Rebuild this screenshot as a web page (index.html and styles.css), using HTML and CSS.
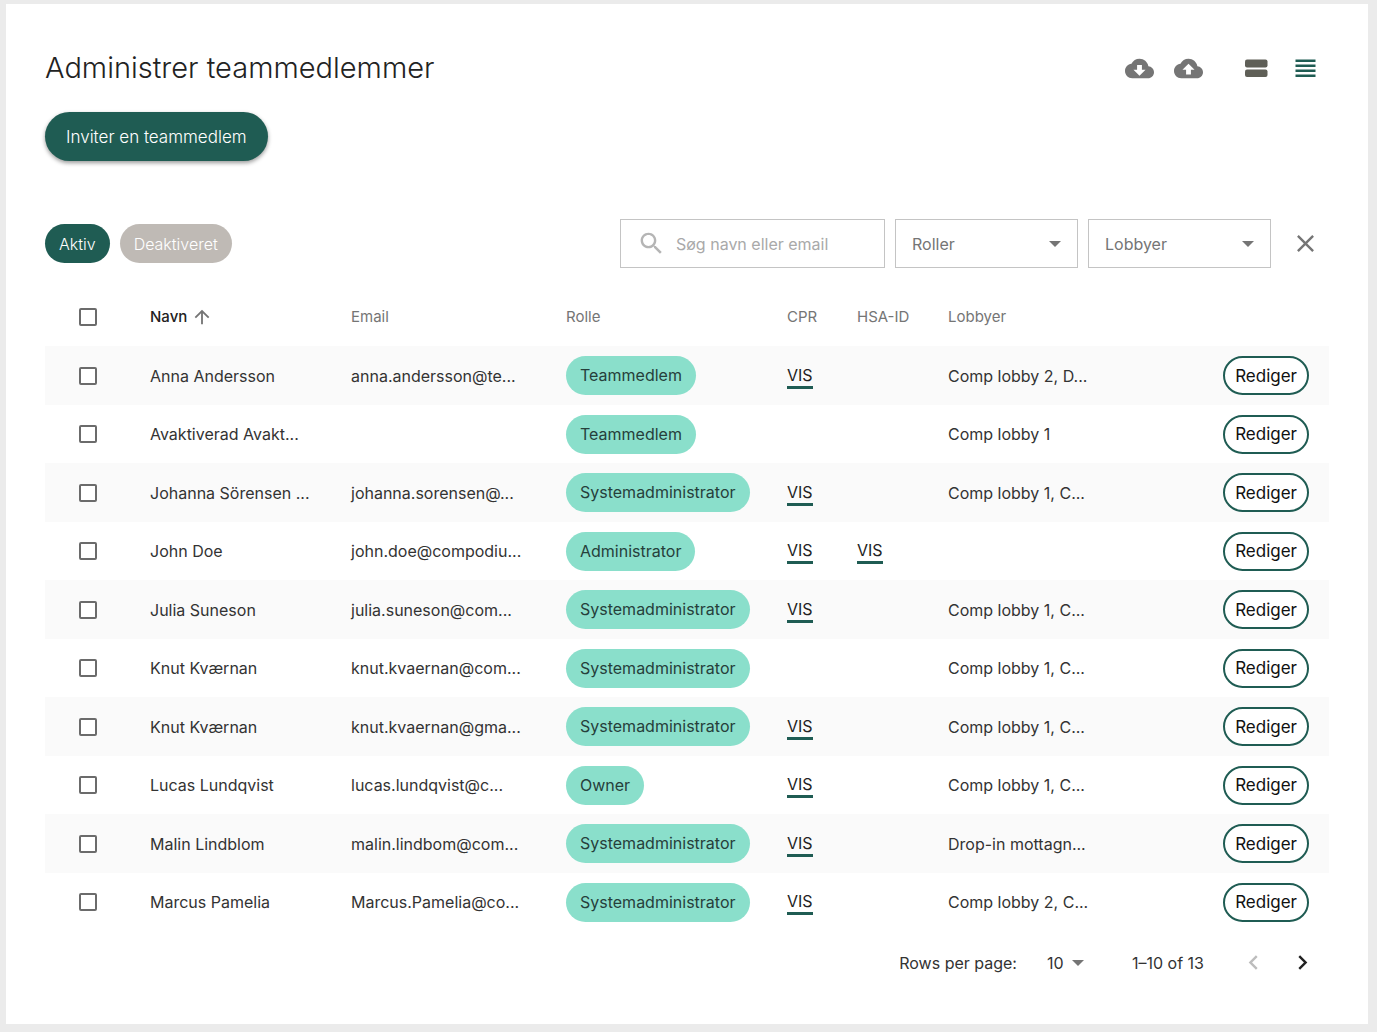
FILE: index.html
```
<!DOCTYPE html>
<html lang="da">
  <head>
    <meta charset="UTF-8" />
    <title>Administrer teammedlemmer</title>
    <meta name="viewport" content="width=device-width, initial-scale=1.0" />
    <link rel="stylesheet" href="styles.css">
  </head>
  <body>
    <!-- shared icons -->
    <svg width="0" height="0" class="sprite" aria-hidden="true">
      <symbol id="i-down" viewBox="0 0 24 24"><path d="M19.35 10.04C18.67 6.59 15.64 4 12 4 9.11 4 6.6 5.64 5.35 8.04 2.34 8.36 0 10.91 0 14c0 3.31 2.69 6 6 6h13c2.76 0 5-2.24 5-5 0-2.64-2.05-4.78-4.65-4.96zM17 13l-5 5-5-5h3V9h4v4h3z"/></symbol>
      <symbol id="i-up" viewBox="0 0 24 24"><path d="M19.35 10.04C18.67 6.59 15.64 4 12 4 9.11 4 6.6 5.64 5.35 8.04 2.34 8.36 0 10.91 0 14c0 3.31 2.69 6 6 6h13c2.76 0 5-2.24 5-5 0-2.64-2.05-4.78-4.65-4.96zM14 13v4h-4v-4H7l5-5 5 5h-3z"/></symbol>
      <symbol id="i-search" viewBox="0 0 24 24"><path d="M15.5 14h-.79l-.28-.27C15.41 12.59 16 11.11 16 9.5 16 5.91 13.09 3 9.5 3S3 5.91 3 9.5 5.91 16 9.5 16c1.61 0 3.09-.59 4.23-1.57l.27.28v.79l5 4.99L20.49 19l-4.99-5zm-6 0C7.01 14 5 11.99 5 9.5S7.01 5 9.5 5 14 7.01 14 9.5 11.99 14 9.5 14z"/></symbol>
      <symbol id="i-close" viewBox="0 0 24 24"><path d="M19 6.41L17.59 5 12 10.59 6.41 5 5 6.41 10.59 12 5 17.59 6.41 19 12 13.41 17.59 19 19 17.59 13.41 12z"/></symbol>
      <symbol id="i-arrow" viewBox="0 0 24 24"><path d="M4 12l1.41 1.41L11 7.83V20h2V7.83l5.58 5.59L20 12l-8-8-8 8z"/></symbol>
      <symbol id="i-left" viewBox="0 0 24 24"><path d="M15.41 16.59L10.83 12l4.58-4.59L14 6l-6 6 6 6 1.41-1.41z"/></symbol>
      <symbol id="i-right" viewBox="0 0 24 24"><path d="M8.59 16.59L13.17 12 8.59 7.41 10 6l6 6-6 6-1.41-1.41z"/></symbol>
    </svg>

    <div class="page">
      <main class="card">
        <header class="head">
          <h1>Administrer teammedlemmer</h1>
          <div class="tools">
            <button class="icon-btn" aria-label="Download"><svg><use href="#i-down"/></svg></button>
            <button class="icon-btn" aria-label="Upload"><svg><use href="#i-up"/></svg></button>
            <button class="icon-btn view-cards" aria-label="Kort"><svg viewBox="0 0 29 29"><rect x="3" y="5.5" width="22.5" height="8" rx="2"/><rect x="3" y="15.5" width="22.5" height="7.5" rx="2"/></svg></button>
            <button class="icon-btn view-list" aria-label="Liste"><svg viewBox="0 0 29 29"><path d="M4.5 5.5h20V8h-20zM4.5 10.5h20V13h-20zM4.5 15.5h20V18h-20zM4.5 20.5h20V23h-20z"/></svg></button>
          </div>
        </header>

        <button class="btn-invite">Inviter en teammedlem</button>

        <div class="filters">
          <button class="tab active">Aktiv</button>
          <button class="tab">Deaktiveret</button>
          <label class="search">
            <svg><use href="#i-search"/></svg>
            <input type="text" placeholder="Søg navn eller email" aria-label="Søg navn eller email" />
          </label>
          <div class="select">
            <select aria-label="Roller"><option>Roller</option></select>
          </div>
          <div class="select">
            <select aria-label="Lobbyer"><option>Lobbyer</option></select>
          </div>
          <button class="icon-btn clear" aria-label="Ryd"><svg><use href="#i-close"/></svg></button>
        </div>

        <table class="members">
          <colgroup>
            <col class="c-check" /><col class="c-name" /><col class="c-email" /><col class="c-role" /><col class="c-cpr" /><col class="c-hsa" /><col />
            <col class="c-edit" />
          </colgroup>
          <thead>
            <tr>
              <th><input type="checkbox" aria-label="Vælg alle" /></th>
              <th class="sorted"><span>Navn<svg><use href="#i-arrow"/></svg></span></th>
              <th>Email</th>
              <th>Rolle</th>
              <th>CPR</th>
              <th>HSA-ID</th>
              <th>Lobbyer</th>
              <th></th>
            </tr>
          </thead>
          <tbody>
            <tr>
              <td><input type="checkbox" aria-label="Anna Andersson" /></td>
              <td>Anna Andersson</td>
              <td>anna.andersson@te...</td>
              <td><span class="role">Teammedlem</span></td>
              <td><a href="#">VIS</a></td>
              <td></td>
              <td>Comp lobby 2, D...</td>
              <td><button class="btn-edit">Rediger</button></td>
            </tr>
            <tr>
              <td><input type="checkbox" aria-label="Avaktiverad Avakt..." /></td>
              <td>Avaktiverad Avakt...</td>
              <td></td>
              <td><span class="role">Teammedlem</span></td>
              <td></td>
              <td></td>
              <td>Comp lobby 1</td>
              <td><button class="btn-edit">Rediger</button></td>
            </tr>
            <tr>
              <td><input type="checkbox" aria-label="Johanna Sörensen" /></td>
              <td>Johanna Sörensen ...</td>
              <td>johanna.sorensen@...</td>
              <td><span class="role">Systemadministrator</span></td>
              <td><a href="#">VIS</a></td>
              <td></td>
              <td>Comp lobby 1, C...</td>
              <td><button class="btn-edit">Rediger</button></td>
            </tr>
            <tr>
              <td><input type="checkbox" aria-label="John Doe" /></td>
              <td>John Doe</td>
              <td>john.doe@compodiu...</td>
              <td><span class="role">Administrator</span></td>
              <td><a href="#">VIS</a></td>
              <td><a href="#">VIS</a></td>
              <td></td>
              <td><button class="btn-edit">Rediger</button></td>
            </tr>
            <tr>
              <td><input type="checkbox" aria-label="Julia Suneson" /></td>
              <td>Julia Suneson</td>
              <td>julia.suneson@com...</td>
              <td><span class="role">Systemadministrator</span></td>
              <td><a href="#">VIS</a></td>
              <td></td>
              <td>Comp lobby 1, C...</td>
              <td><button class="btn-edit">Rediger</button></td>
            </tr>
            <tr>
              <td><input type="checkbox" aria-label="Knut Kværnan" /></td>
              <td>Knut Kværnan</td>
              <td>knut.kvaernan@com...</td>
              <td><span class="role">Systemadministrator</span></td>
              <td></td>
              <td></td>
              <td>Comp lobby 1, C...</td>
              <td><button class="btn-edit">Rediger</button></td>
            </tr>
            <tr>
              <td><input type="checkbox" aria-label="Knut Kværnan" /></td>
              <td>Knut Kværnan</td>
              <td>knut.kvaernan@gma...</td>
              <td><span class="role">Systemadministrator</span></td>
              <td><a href="#">VIS</a></td>
              <td></td>
              <td>Comp lobby 1, C...</td>
              <td><button class="btn-edit">Rediger</button></td>
            </tr>
            <tr>
              <td><input type="checkbox" aria-label="Lucas Lundqvist" /></td>
              <td>Lucas Lundqvist</td>
              <td>lucas.lundqvist@c...</td>
              <td><span class="role">Owner</span></td>
              <td><a href="#">VIS</a></td>
              <td></td>
              <td>Comp lobby 1, C...</td>
              <td><button class="btn-edit">Rediger</button></td>
            </tr>
            <tr>
              <td><input type="checkbox" aria-label="Malin Lindblom" /></td>
              <td>Malin Lindblom</td>
              <td>malin.lindbom@com...</td>
              <td><span class="role">Systemadministrator</span></td>
              <td><a href="#">VIS</a></td>
              <td></td>
              <td>Drop-in mottagn...</td>
              <td><button class="btn-edit">Rediger</button></td>
            </tr>
            <tr>
              <td><input type="checkbox" aria-label="Marcus Pamelia" /></td>
              <td>Marcus Pamelia</td>
              <td>Marcus.Pamelia@co...</td>
              <td><span class="role">Systemadministrator</span></td>
              <td><a href="#">VIS</a></td>
              <td></td>
              <td>Comp lobby 2, C...</td>
              <td><button class="btn-edit">Rediger</button></td>
            </tr>
          </tbody>
        </table>

        <footer class="pager">
          <label for="rows">Rows per page:</label>
          <div class="select rows">
            <select id="rows"><option>10</option></select>
          </div>
          <span class="range">1–10 of 13</span>
          <button class="icon-btn" aria-label="Forrige" disabled><svg><use href="#i-left"/></svg></button>
          <button class="icon-btn next" aria-label="Næste"><svg><use href="#i-right"/></svg></button>
        </footer>
      </main>
    </div>
  </body>
</html>
```

FILE: styles.css
```
* {
  box-sizing: border-box;
}
body {
  margin: 0;
  background: #fff;
  color: #333;
  font-family: Inter, "Open Sans", sans-serif;
  font-size: 16px;
  line-height: 24px;
}
button,
input,
select {
  font: inherit;
  margin: 0;
}
button {
  border: none;
  cursor: pointer;
}
.sprite {
  position: absolute;
}
.page {
  background: #ebebeb;
  margin-right: 4px;
  padding: 4px 9px 8px 6px;
}
.card {
  background: #fff;
  padding: 44px 39px 42px;
}

.head {
  display: flex;
  align-items: center;
  justify-content: space-between;
}
.head h1 {
  margin: 0;
  color: #222;
  font-size: 29px;
  font-weight: 300;
  line-height: 40px;
}
.tools {
  display: flex;
  gap: 20px;
  padding-right: 9px;
}
.icon-btn {
  display: flex;
  padding: 0;
  background: none;
  color: #757575;
}
.icon-btn svg {
  width: 29px;
  height: 29px;
  fill: currentColor;
}
.view-cards {
  margin-left: 19px;
  color: #5f5f57;
}
.view-list {
  color: #1f5c53;
}

.btn-invite {
  display: block;
  height: 49px;
  margin-top: 24px;
  padding: 0 21px;
  border-radius: 25px;
  background: #1f5c53;
  color: #fff;
  font-size: 17px;
  font-weight: 300;
  box-shadow: 0 2px 4px rgba(0, 0, 0, 0.4);
}

.filters {
  display: flex;
  align-items: center;
  gap: 10px;
  margin-top: 58px;
  padding-right: 9px;
}
.tab {
  height: 39px;
  padding: 0 14px;
  border-radius: 20px;
  background: #bfbab5;
  color: #fff;
  font-weight: 300;
}
.tab.active {
  background: #1f5c53;
}
.search {
  display: flex;
  align-items: center;
  width: 265px;
  height: 49px;
  margin-left: auto;
  padding: 0 16px;
  border: 1px solid #c4c4c4;
}
.search svg {
  flex: none;
  width: 29px;
  height: 29px;
  fill: #b5b5b5;
}
.search input {
  width: 100%;
  margin-left: 10px;
  padding: 0;
  border: none;
  outline: none;
  background: none;
}
.search input::placeholder {
  color: #a9a9a9;
  opacity: 1;
}
.select {
  position: relative;
  width: 183px;
}
.select select {
  width: 100%;
  height: 49px;
  padding: 0 40px 0 16px;
  border: 1px solid #c4c4c4;
  border-radius: 0;
  background: none;
  color: #757575;
  appearance: none;
}
.select::after {
  content: "";
  position: absolute;
  top: 50%;
  right: 17px;
  margin-top: -3px;
  border: 6px solid transparent;
  border-top-color: #757575;
  border-bottom: none;
  pointer-events: none;
}
.clear {
  margin-left: 10px;
}

.members {
  width: 100%;
  margin-top: 20px;
  border-collapse: collapse;
  table-layout: fixed;
}
.c-check {
  width: 89px;
}
.c-name {
  width: 201px;
}
.c-email {
  width: 215px;
}
.c-role {
  width: 221px;
}
.c-cpr {
  width: 70px;
}
.c-hsa {
  width: 91px;
}
.c-edit {
  width: 140px;
}
.members th,
.members td {
  height: 58px;
  padding: 0 0 0 16px;
  text-align: left;
  white-space: nowrap;
}
.members th {
  color: #757575;
  font-size: 15px;
  font-weight: 400;
}
.members .sorted {
  color: #222;
  font-weight: 500;
}
.sorted span {
  display: flex;
  align-items: center;
  gap: 4px;
}
.sorted svg {
  width: 22px;
  height: 22px;
  fill: #757575;
}
.members tbody tr:nth-child(odd) {
  background: #fafafa;
}
.members tbody tr:nth-child(odd) td {
  height: 59px;
}
.members th:first-child,
.members td:first-child {
  padding-left: 34px;
}
.members td:last-child {
  padding-right: 20px;
  text-align: right;
}
.members input {
  display: block;
  width: 18px;
  height: 18px;
  border: 2px solid #6b6b6b;
  border-radius: 2px;
  background: #fff;
  appearance: none;
}
.members a {
  display: inline-block;
  border-bottom: 3px solid #1f5c53;
  color: #222;
  line-height: 22px;
  text-decoration: none;
}
.role {
  display: inline-block;
  padding: 0 14px;
  border-radius: 20px;
  background: #8adfcb;
  color: #26403b;
  line-height: 39px;
}
.btn-edit {
  height: 39px;
  padding: 0 10px;
  border: 2px solid #1f5c53;
  border-radius: 20px;
  background: #fff;
  color: #111;
  font-size: 17px;
}

.pager {
  display: flex;
  align-items: center;
  justify-content: flex-end;
  margin-top: 12px;
  padding-right: 12px;
}
.select.rows {
  width: 53px;
  margin-left: 14px;
}
.rows select {
  height: 39px;
  border: none;
  color: #333;
  padding: 0 16px;
}
.select.rows::after {
  right: 0;
}
.range {
  margin: 0 35px 0 48px;
}
.pager .icon-btn {
  color: #bdbdbd;
}
.pager .next {
  margin-left: 20px;
  color: #222;
}
```
